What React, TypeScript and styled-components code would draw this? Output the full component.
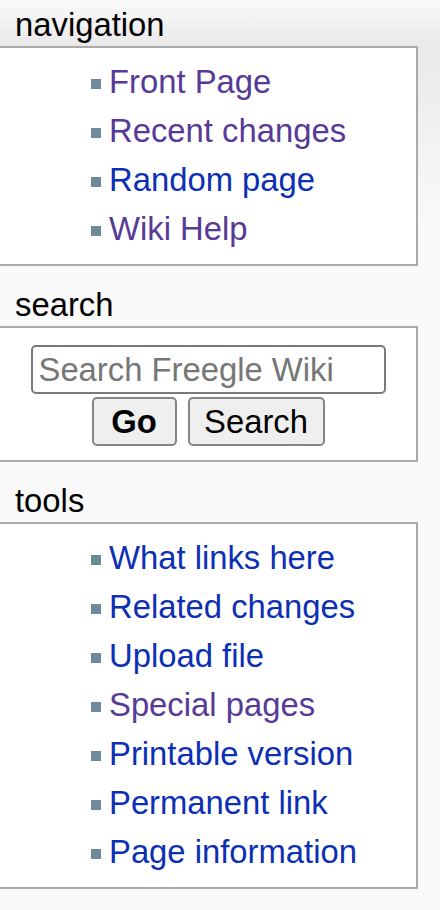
import React from 'react';
import styled, { createGlobalStyle } from 'styled-components';

const GlobalStyle = createGlobalStyle`
  html, body {
    margin: 0;
    padding: 0;
  }
  body {
    font-family: "Liberation Sans", Arial, sans-serif;
    background: linear-gradient(to bottom, #fafafa 0, #e9e9e9 46px, #f9f9f9 220px) no-repeat, #f9f9f9;
    min-height: 910px;
    overflow: hidden;
  }
`;

const Sidebar = styled.div`
  width: 420px;
  margin-left: -2px;
  padding-top: 4px;
`;

const Portlet = styled.div`
  & + & {
    margin-top: 18px;
  }
`;

const Heading = styled.h3`
  margin: 0;
  padding-left: 17px;
  font-size: 32.8px;
  line-height: 42px;
  font-weight: normal;
  color: #000;
`;

const PBody = styled.div<{ $pad?: string }>`
  background: #fff;
  border: 2px solid #aaa;
  padding: ${({ $pad }) => $pad || '9px 0 11px'};
`;

const List = styled.ul`
  list-style: none;
  margin: 0;
  padding: 0 0 0 91px;
`;

const Item = styled.li`
  display: flex;
  align-items: baseline;
  font-size: 32.8px;
  line-height: 49px;

  &::before {
    content: '';
    flex: none;
    width: 10px;
    height: 10px;
    margin-right: 8px;
    background: #6f8b99;
    transform: translateY(-4px);
  }
`;

const Link = styled.a<{ $visited?: boolean }>`
  color: ${({ $visited }) => ($visited ? '#573a98' : '#0c2fb4')};
  text-decoration: none;
  white-space: nowrap;
`;

const SearchForm = styled.form`
  display: flex;
  flex-direction: column;
  align-items: center;
  gap: 3px;
  margin: 0;
`;

const SearchInput = styled.input`
  box-sizing: border-box;
  width: 355px;
  height: 49px;
  padding: 0 6px;
  border: 2px solid #7a7a7a;
  border-radius: 5px;
  font-family: "Liberation Sans", Arial, sans-serif;
  font-size: 32.8px;
  background: #fff;
  outline: none;

  &::placeholder {
    color: #767676;
  }
`;

const Buttons = styled.div`
  display: flex;
  gap: 11px;
`;

const Button = styled.button<{ $bold?: boolean; $w: number }>`
  box-sizing: border-box;
  width: ${({ $w }) => $w}px;
  height: 49px;
  padding: 0;
  border: 2px solid #858585;
  border-radius: 5px;
  background: #efefef;
  color: #000;
  font-family: "Liberation Sans", Arial, sans-serif;
  font-size: 32.8px;
  font-weight: ${({ $bold }) => ($bold ? 'bold' : 'normal')};
`;

const navigation = [
  { label: 'Front Page', visited: true },
  { label: 'Recent changes', visited: true },
  { label: 'Random page', visited: false },
  { label: 'Wiki Help', visited: true },
];

const tools = [
  { label: 'What links here', visited: false },
  { label: 'Related changes', visited: false },
  { label: 'Upload file', visited: false },
  { label: 'Special pages', visited: true },
  { label: 'Printable version', visited: false },
  { label: 'Permanent link', visited: false },
  { label: 'Page information', visited: false },
];

const LinkList: React.FC<{ items: { label: string; visited: boolean }[] }> = ({ items }) => (
  <List>
    {items.map(item => (
      <Item key={item.label}>
        <Link href="#" $visited={item.visited}>{item.label}</Link>
      </Item>
    ))}
  </List>
);

const App: React.FC = () => (
  <>
    <GlobalStyle />
    <Sidebar>
      <Portlet>
        <Heading>navigation</Heading>
        <PBody>
          <LinkList items={navigation} />
        </PBody>
      </Portlet>

      <Portlet>
        <Heading>search</Heading>
        <PBody $pad="17px 0 14px">
          <SearchForm onSubmit={e => e.preventDefault()}>
            <SearchInput placeholder="Search Freegle Wiki" />
            <Buttons>
              <Button type="button" $bold $w={85}>Go</Button>
              <Button type="button" $w={137}>Search</Button>
            </Buttons>
          </SearchForm>
        </PBody>
      </Portlet>

      <Portlet>
        <Heading>tools</Heading>
        <PBody>
          <LinkList items={tools} />
        </PBody>
      </Portlet>
    </Sidebar>
  </>
);

export default App;
